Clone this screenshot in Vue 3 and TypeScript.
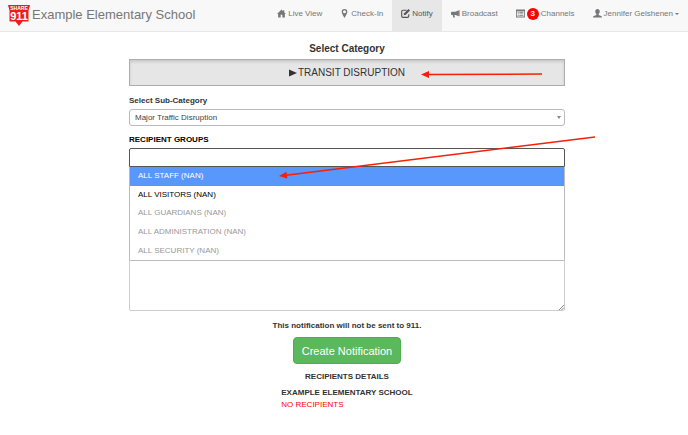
<script setup lang="ts">
import { ref } from 'vue'

interface Group {
  name: string
  state: 'active' | 'enabled' | 'disabled'
}

const groups: Group[] = [
  { name: 'ALL STAFF (NAN)', state: 'active' },
  { name: 'ALL VISITORS (NAN)', state: 'enabled' },
  { name: 'ALL GUARDIANS (NAN)', state: 'disabled' },
  { name: 'ALL ADMINISTRATION (NAN)', state: 'disabled' },
  { name: 'ALL SECURITY (NAN)', state: 'disabled' },
]

const subCategory = ref('Major Traffic Disruption')
const recipient = ref('')
const message = ref('')
</script>

<template>
  <div class="page">
    <header class="navbar">
      <a class="brand" href="#">
        <svg class="logo" viewBox="0 0 22 21" aria-hidden="true">
          <path d="M0 0H22L20.500 5.500V16.500H14.500L11 21L7.500 16.500H1.500V5.500Z" fill="#f01c1c" />
          <text x="11" y="4.6" text-anchor="middle" font-size="5" font-weight="700" fill="#fff">SHARE</text>
          <text x="11" y="14.8" text-anchor="middle" font-size="11" font-weight="700" fill="#fff">911</text>
        </svg>
        <span>Example Elementary School</span>
      </a>
      <nav class="nav">
        <a class="nav-item" href="#">
          <svg class="icon" viewBox="0 0 16 16"><path d="M8 1L0 9H2V15H6.5V10H9.5V15H14V9H16L13 6V2H11V4Z" /></svg>
          <span>Live View</span>
        </a>
        <a class="nav-item" href="#">
          <svg class="icon" viewBox="0 0 16 16"><path fill-rule="evenodd" d="M8 0A5 5 0 0 0 3 5C3 8.500 8 16 8 16S13 8.500 13 5A5 5 0 0 0 8 0ZM8 2.300A2.700 2.700 0 1 1 8 7.700A2.700 2.700 0 1 1 8 2.300Z" /></svg>
          <span>Check-In</span>
        </a>
        <a class="nav-item current" href="#" aria-current="page">
          <svg class="icon" viewBox="0 0 16 16">
            <path d="M10 2.200H3.500Q1.200 2.200 1.200 4.500V12.500Q1.200 14.800 3.500 14.800H11.500Q13.800 14.800 13.800 12.500V9.500" fill="none" stroke="currentColor" stroke-width="2" />
            <path d="M13.200 0L16 2.800L8.500 10.300L4.700 11.300L5.700 7.500Z" />
          </svg>
          <span>Notify</span>
        </a>
        <a class="nav-item" href="#">
          <svg class="icon" viewBox="0 0 16 16"><path d="M14 2V13L8 10.500H6L7 15H4L3 10.500H1.500Q0 10.500 0 9V6.500Q0 5 1.500 5H8ZM15 2H16V13H15Z" /></svg>
          <span>Broadcast</span>
        </a>
        <a class="nav-item" href="#">
          <svg class="icon" viewBox="0 0 16 16"><path fill-rule="evenodd" d="M0 1H16V15H0ZM1.500 4V13.500H14.500V4ZM3 5H5V6.500H3ZM6 5H13V6.500H6ZM3 8H5V9.500H3ZM6 8H13V9.500H6ZM3 11H5V12.500H3ZM6 11H13V12.500H6Z" /></svg>
          <span class="badge">3</span>
          <span>Channels</span>
        </a>
        <a class="nav-item" href="#">
          <svg class="icon" viewBox="0 0 16 16"><path d="M8 0C5.500 0 4 2 4 4.500C4 6.500 5 8 6 9V10.500L1.500 12.500Q0 13.200 0 15H16Q16 13.200 14.500 12.500L10 10.500V9C11 8 12 6.500 12 4.500C12 2 10.500 0 8 0Z" /></svg>
          <span>Jennifer Gelshenen</span>
          <span class="caret"></span>
        </a>
      </nav>
    </header>

    <main class="content">
      <h1 class="title">Select Category</h1>
      <button class="category" type="button">
        <svg class="play" viewBox="0 0 8 8" aria-hidden="true"><path d="M0 .5L8 4L0 7.500Z" /></svg>
        <span>TRANSIT DISRUPTION</span>
      </button>

      <label class="label" for="sub-category">Select Sub-Category</label>
      <div class="select-wrap">
        <select id="sub-category" v-model="subCategory" class="select">
          <option>Major Traffic Disruption</option>
        </select>
        <span class="select-arrow"></span>
      </div>

      <label class="label dark" for="recipients">RECIPIENT GROUPS</label>
      <div class="combo">
        <input id="recipients" v-model="recipient" class="combo-input" type="text" role="combobox" aria-expanded="true" aria-controls="group-list" />
        <ul id="group-list" class="options" role="listbox">
          <li
            v-for="group in groups"
            :key="group.name"
            class="option"
            :class="group.state"
            role="option"
            :aria-selected="group.state === 'active'"
            :aria-disabled="group.state === 'disabled'"
          >{{ group.name }}</li>
        </ul>
      </div>

      <div class="message-wrap">
        <textarea v-model="message" class="message" aria-label="Message"></textarea>
        <svg class="grip" viewBox="0 0 6 6" aria-hidden="true"><path d="M0 6L6 0M3 6L6 3" /></svg>
      </div>

      <p class="notice">This notification will not be sent to 911.</p>
      <button class="create" type="button">Create Notification</button>

      <h2 class="details-title">RECIPIENTS DETAILS</h2>
      <div class="details">
        <strong>EXAMPLE ELEMENTARY SCHOOL</strong>
        <span class="none">NO RECIPIENTS</span>
      </div>
    </main>

    <svg class="arrows" viewBox="0 0 688 435" aria-hidden="true">
      <path d="M428 74.500L542 74" class="shaft" />
      <path d="M421 74.500L429 71V78Z" />
      <path d="M286 175.200L595 137" class="shaft" />
      <path d="M279 176L286.500 171.800L287.300 178.500Z" />
    </svg>
  </div>
</template>

<style>
body {
  background: #fff;
}
</style>

<style scoped>
.page {
  position: relative;
  font-family: "Liberation Sans", Arial, sans-serif;
  font-size: 8px;
  line-height: 12px;
  color: #333;
}

.page * {
  box-sizing: border-box;
}

.navbar {
  display: flex;
  justify-content: space-between;
  height: 32px;
  padding-left: 8px;
  background: #f8f8f8;
  border-bottom: 1px solid #e7e7e7;
}

.brand {
  display: flex;
  align-items: center;
  gap: 2px;
  font-size: 13px;
  color: #777;
  text-decoration: none;
  white-space: nowrap;
}

.brand span {
  padding-bottom: 2px;
}

.logo {
  width: 22px;
  height: 21px;
}

.nav {
  display: flex;
}

.nav-item {
  display: flex;
  align-items: center;
  gap: 2px;
  padding: 0 9px 4px;
  color: #777;
  text-decoration: none;
  white-space: nowrap;
}

.nav-item.current {
  background: #e7e7e7;
  color: #555;
}

.icon {
  width: 9px;
  height: 9px;
  fill: currentColor;
}

.badge {
  width: 12px;
  height: 12px;
  border-radius: 50%;
  background: #f00;
  color: #fff;
  font-weight: 700;
  text-align: center;
}

.caret {
  border: 2px solid transparent;
  border-top-color: currentColor;
  border-bottom: 0;
}

.content {
  display: flex;
  flex-direction: column;
  padding: 11px 123px 24px 129px;
}

.title {
  margin: 0 0 4px;
  font-size: 10px;
  text-align: center;
}

.category {
  display: flex;
  align-items: center;
  justify-content: center;
  gap: 1px;
  height: 27px;
  margin-bottom: 9px;
  padding: 0;
  border: 1px solid #adadad;
  background: #e6e6e6;
  box-shadow: inset 0 2px 3px rgba(0, 0, 0, 0.125);
  font: inherit;
  font-size: 10px;
  color: #333;
}

.play {
  width: 8px;
  height: 8px;
  fill: currentColor;
}

.label {
  margin-bottom: 2px;
  font-weight: 700;
}

.label.dark {
  color: #000;
}

.select-wrap {
  position: relative;
  display: flex;
  margin-bottom: 8px;
}

.select {
  flex: 1;
  height: 17px;
  padding: 0 5px;
  appearance: none;
  border: 1px solid #bbb;
  border-radius: 3px;
  background: #fff;
  font: inherit;
  color: #444;
}

.select-arrow {
  position: absolute;
  top: 7px;
  right: 4px;
  border: 2px solid transparent;
  border-top: 3px solid #888;
  border-bottom: 0;
}

.combo {
  position: relative;
  margin-bottom: 24px;
}

.combo-input {
  display: block;
  width: 100%;
  height: 19px;
  padding: 0 5px;
  border: 1px solid #555;
  border-radius: 2px 2px 0 0;
  background: #fff;
  font: inherit;
  outline: none;
}

.options {
  position: absolute;
  z-index: 1;
  top: 100%;
  left: 0;
  right: 0;
  display: grid;
  grid-auto-rows: 1fr;
  height: 94px;
  margin: 0;
  padding: 0;
  border: 1px solid #bbb;
  border-top: 0;
  border-radius: 0 0 2px 2px;
  background: #fff;
  list-style: none;
}

.option {
  display: flex;
  align-items: center;
  padding: 0 8px;
  color: #000;
}

.option.active {
  background: #5897fb;
  color: #fff;
}

.option.disabled {
  color: #999;
}

.message-wrap {
  position: relative;
  display: flex;
}

.message {
  flex: 1;
  height: 120px;
  padding: 4px;
  border: 1px solid #ccc;
  border-radius: 2px;
  font: inherit;
  resize: none;
}

.grip {
  position: absolute;
  right: 1px;
  bottom: 1px;
  width: 5px;
  height: 5px;
  fill: none;
  stroke: #777;
}

.notice {
  margin: 9px 0 5px;
  font-weight: 700;
  text-align: center;
}

.create {
  align-self: center;
  height: 27px;
  padding: 0 8px;
  border: 1px solid #4cae4c;
  border-radius: 4px;
  background: #5cb85c;
  font: inherit;
  font-size: 11px;
  color: #fff;
}

.details-title {
  margin: 7px 0 4px;
  font-size: 8px;
  text-align: center;
}

.details {
  display: flex;
  flex-direction: column;
  align-self: center;
}

.none {
  color: #f00;
}

.arrows {
  position: absolute;
  z-index: 2;
  top: 0;
  left: 0;
  width: 688px;
  height: 435px;
  pointer-events: none;
  fill: #f91f06;
}

.shaft {
  fill: none;
  stroke: #f91f06;
  stroke-width: 1.5;
}
</style>
